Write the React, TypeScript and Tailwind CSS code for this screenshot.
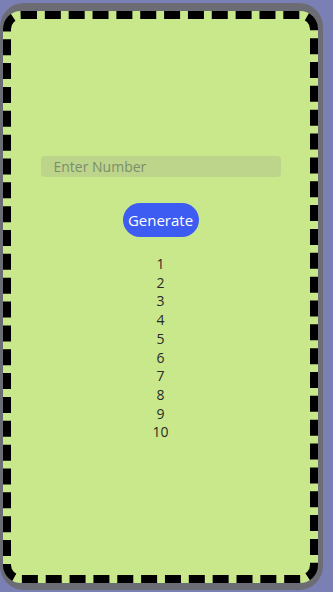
import { useState } from "react";

const App = () => {
  const [value, setValue] = useState("");
  const numbers = [1, 2, 3, 4, 5, 6, 7, 8, 9, 10];

  return (
    <div className="h-[592px] w-[333px] bg-[#7b80b4] pt-[3px] pb-[2px] pr-[10px]">
      {/* device frame */}
      <div className="h-full rounded-[24px] bg-[#6c6d74] pt-[8px] pb-[7px] pl-[3px] pr-[5px]">
        <div
          className="flex h-full flex-col items-center justify-center rounded-[18px] border-[8px] border-dashed border-black bg-[#c9e78b] pt-[4px]"
          style={{ fontFamily: '"Open Sans", "Noto Sans", sans-serif' }}
        >
          <input
            value={value}
            onChange={(e) => setValue(e.target.value)}
            placeholder="Enter Number"
            className="h-[21px] w-[240px] rounded-[4px] bg-[#bdd58b] px-[13px] text-[14px] text-[#333] outline-none placeholder:text-[#7c8d6b]"
          />
          <button className="mt-[26px] h-[34px] w-[76px] rounded-full bg-[#3d5cf2] text-[15px] text-white">
            Generate
          </button>
          <div className="mt-[18px] flex flex-col items-center text-[14px] leading-[18.7px] text-[#2a2a2a]">
            {numbers.map((n) => (
              <span key={n}>{n}</span>
            ))}
          </div>
        </div>
      </div>
    </div>
  );
};

export default App;
